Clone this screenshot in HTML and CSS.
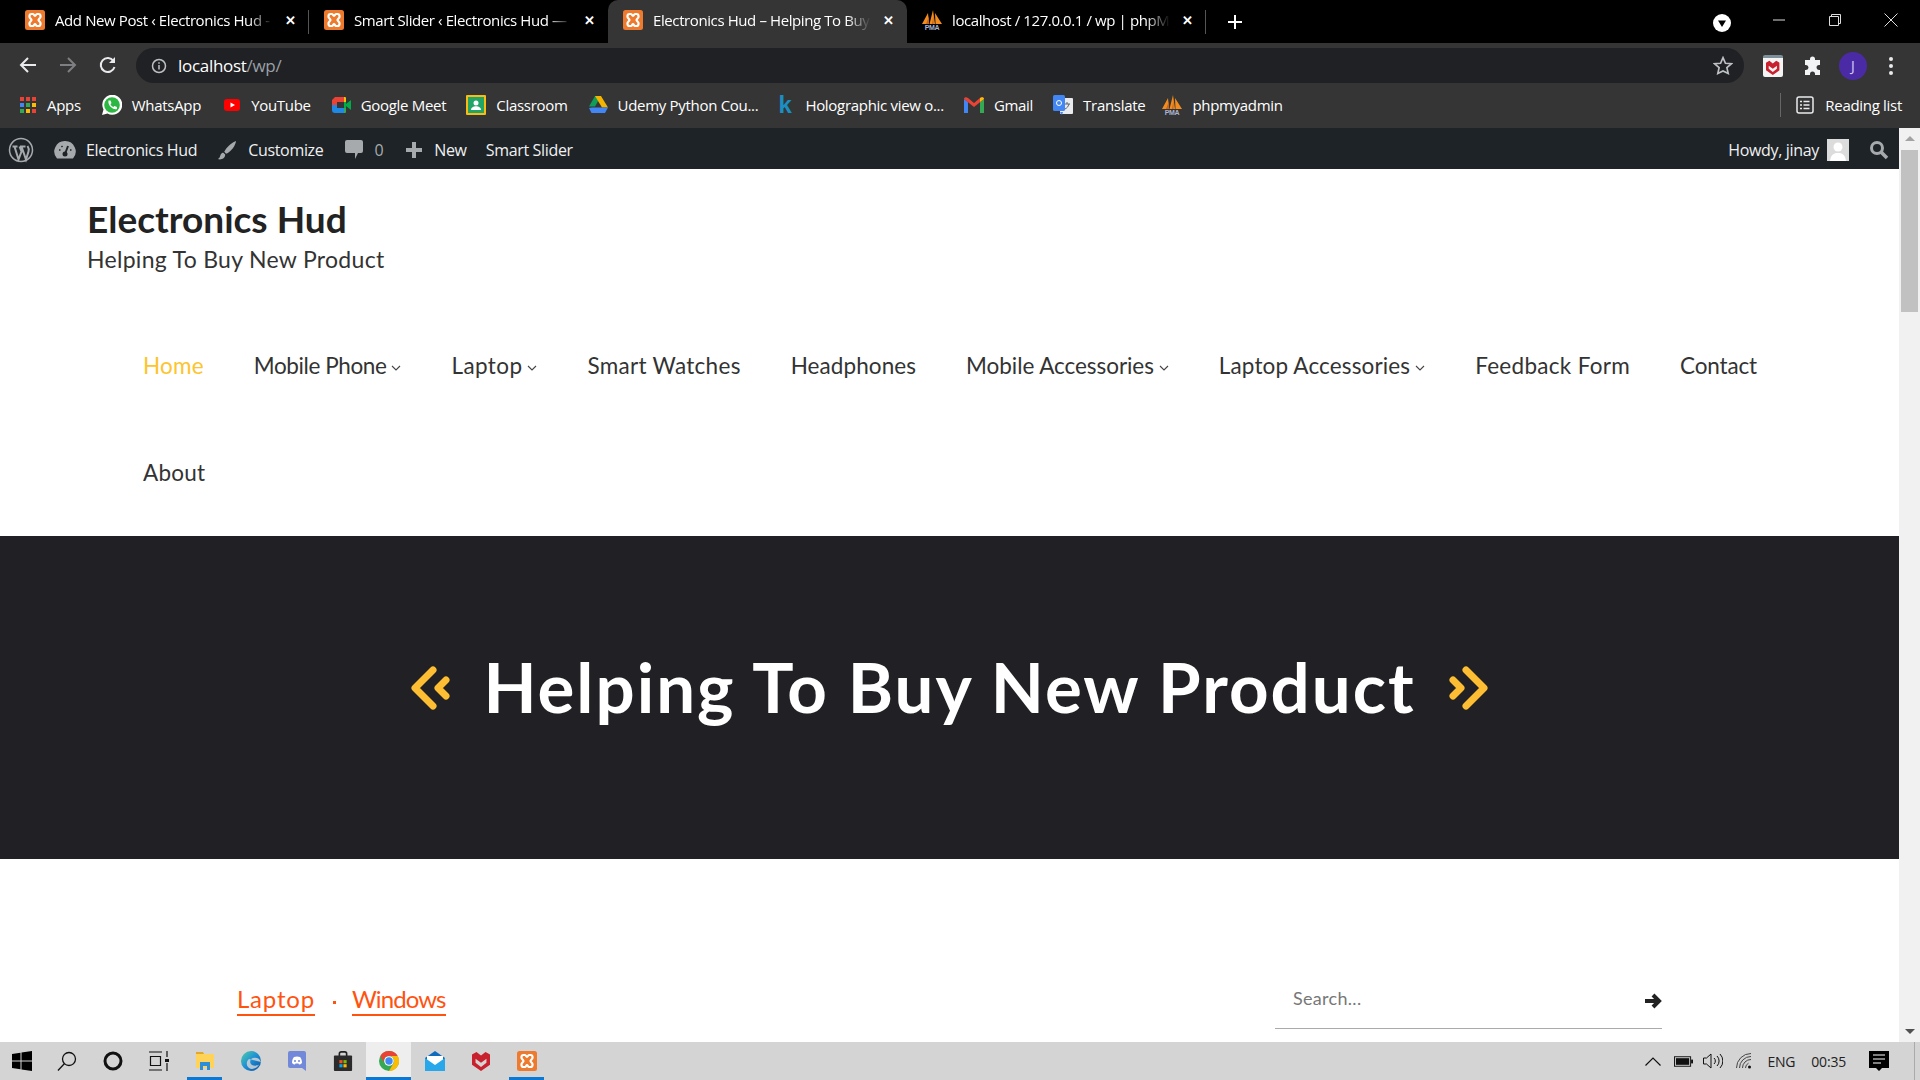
FILE: index.html
```html
<!DOCTYPE html>
<html lang="en">
<head>
  <meta charset="UTF-8" />
  <title>Electronics Hud – Helping To Buy New Product</title>
  <link rel="stylesheet" href="styles.css">
</head>
<body>
  <svg class="defs" width="0" height="0">
    <symbol id="xampp" viewBox="0 0 20 20">
      <rect width="20" height="20" rx="2.500" fill="#ee7a2d"/>
      <path d="M4.500 6a2 2 0 0 1 2-2H8c1 0 1.200 2 2 2s1-2 2-2h1.500a2 2 0 0 1 2 2v1c0 1-2 2-2 3s2 2 2 3v1a2 2 0 0 1-2 2H12c-1 0-1.200-2-2-2s-1 2-2 2H6.500a2 2 0 0 1-2-2v-1c0-1 2-2 2-3s-2-2-2-3z" fill="none" stroke="#fff" stroke-width="2.200"/>
    </symbol>
    <symbol id="pma" viewBox="0 0 20 20">
      <path d="M0 14 6 3l1 11zM7.500 14 11 0l2 14zM13.500 14 13 3l7 11z" fill="#f28c1e"/>
      <path d="M4 14 7 6v8zM10 14l1.500-9V14z" fill="#c9641a"/>
    </symbol>
    <symbol id="mcafee" viewBox="0 0 20 22">
      <path fill-rule="evenodd" d="M0 4 5 1l5 4 5-4 5 3v11l-10 7-10-7zM4 8.500V13l6 4.500 6-4.500V8.500l-6 4.500z" fill="#c8202d"/>
    </symbol>
  </svg>

  <div class="tabstrip">
    <div class="tab">
      <svg class="favicon"><use href="#xampp"/></svg>
      <span class="tab-title">Add New Post ‹ Electronics Hud -</span>
      <span class="tab-x">✕</span>
    </div>
    <div class="tab">
      <svg class="favicon"><use href="#xampp"/></svg>
      <span class="tab-title">Smart Slider ‹ Electronics Hud —</span>
      <span class="tab-x">✕</span>
    </div>
    <div class="tab active">
      <svg class="favicon"><use href="#xampp"/></svg>
      <span class="tab-title">Electronics Hud – Helping To Buy</span>
      <span class="tab-x">✕</span>
    </div>
    <div class="tab tab-last">
      <svg class="favicon" viewBox="0 0 20 20"><use href="#pma"/><text x="10" y="20" text-anchor="middle" class="pma-text">PMA</text></svg>
      <span class="tab-title">localhost / 127.0.0.1 / wp | phpM</span>
      <span class="tab-x">✕</span>
    </div>
    <svg class="newtab" viewBox="0 0 14 14"><path d="M7 0v14M0 7h14" stroke="#fff" stroke-width="2"/></svg>
    <div class="win-controls">
      <svg class="tab-search" viewBox="0 0 18 18"><circle cx="9" cy="9" r="9" fill="#fff"/><path d="M5 6.500h8L9 13z" fill="#000"/></svg>
      <svg class="win-btn" viewBox="0 0 14 14"><path d="M1 7h12" stroke="#ddd"/></svg>
      <svg class="win-btn" viewBox="0 0 14 14"><path d="M1.500 3.500h9v9h-9zM3.500 3.500v-2h9v9h-2" fill="none" stroke="#ddd"/></svg>
      <svg class="win-btn" viewBox="0 0 14 14"><path d="M.5.500l13 13M13.500.500l-13 13" stroke="#ddd"/></svg>
    </div>
  </div>

  <div class="toolbar">
    <svg class="nav-ico" viewBox="0 0 18 18"><path d="M17 9H2M9 2 2 9l7 7" fill="none" stroke="#e8eaed" stroke-width="2"/></svg>
    <svg class="nav-ico" viewBox="0 0 18 18"><path d="M1 9h15M9 2l7 7-7 7" fill="none" stroke="#7d7f82" stroke-width="2"/></svg>
    <svg class="nav-ico" viewBox="0 0 18 18"><path d="M15.500 11a7 7 0 1 1-1-6" fill="none" stroke="#e8eaed" stroke-width="2"/><path d="M16 1v6h-6z" fill="#e8eaed"/></svg>
    <div class="omnibox">
      <svg class="info-ico" viewBox="0 0 16 16"><circle cx="8" cy="8" r="6.500" fill="none" stroke="#bdc1c6" stroke-width="1.500"/><path d="M8 7v4.500M8 4.300v1.400" stroke="#bdc1c6" stroke-width="1.500"/></svg>
      <span class="url">localhost<span class="url-path">/wp/</span></span>
      <svg class="star-ico" viewBox="0 0 18 18"><path d="M9 1.500l2.200 5 5.300.5-4 3.500 1.200 5.300L9 13.500l-4.700 2.300 1.200-5.300-4-3.500 5.300-.5z" fill="none" stroke="#bdc1c6" stroke-width="1.500"/></svg>
    </div>
    <div class="ext-icons">
      <span class="ext-mcafee"><svg viewBox="0 0 20 22"><use href="#mcafee"/></svg></span>
      <svg class="ext-puzzle" viewBox="0 0 20 20"><path d="M7 3a2.500 2.500 0 0 1 5 0v1h5v5h-1a2.500 2.500 0 0 0 0 5h1v5h-5v-1a2.500 2.500 0 0 0-5 0v1H2v-5h1a2.500 2.500 0 0 0 0-5H2V4h5z" fill="#f1f3f4"/></svg>
      <span class="profile">J</span>
      <svg class="menu-dots" viewBox="0 0 4 18"><circle cx="2" cy="2" r="2" fill="#e8eaed"/><circle cx="2" cy="9" r="2" fill="#e8eaed"/><circle cx="2" cy="16" r="2" fill="#e8eaed"/></svg>
    </div>
  </div>

  <div class="bookmarks">
    <a class="bm bm-apps"><svg class="bm-ico" viewBox="0 0 16 16"><path d="M0 0h4v4H0z" fill="#ea4335"/><path d="M6 0h4v4H6z" fill="#ea4335"/><path d="M12 0h4v4h-4z" fill="#ea4335"/><path d="M0 6h4v4H0z" fill="#4285f4"/><path d="M6 6h4v4H6z" fill="#34a853"/><path d="M12 6h4v4h-4z" fill="#fbbc05"/><path d="M0 12h4v4H0z" fill="#34a853"/><path d="M6 12h4v4H6z" fill="#fbbc05"/><path d="M12 12h4v4h-4z" fill="#ea4335"/></svg>Apps</a>
    <a class="bm bm-whatsapp"><svg class="bm-ico wide" viewBox="0 0 20 20"><path d="M0 20l1.500-5.500A10 10 0 1 1 5.500 18.500z" fill="#fff"/><circle cx="10" cy="10" r="7.800" fill="#2bb741"/><path d="M6.500 5.500l2 0 1 2.500-1 1.200c.6 1.300 1.500 2.200 2.800 2.800l1.200-1 2.500 1v2c-4 1.200-9.500-3.500-8.500-8.500z" fill="#fff"/></svg>WhatsApp</a>
    <a class="bm"><svg class="bm-ico" viewBox="0 0 16 16"><rect y="2" width="16" height="12" rx="3" fill="#f00"/><path d="M6.500 5.500 11 8l-4.500 2.500z" fill="#fff"/></svg>YouTube</a>
    <a class="bm"><svg class="bm-ico wide" viewBox="0 0 20 20"><path d="M4 2h9v5H6v3H1V5z" fill="#ea4335"/><path d="M1 10h5v3h7v5H4a3 3 0 0 1-3-3z" fill="#1e88e5"/><path d="M13 2h1a1 1 0 0 1 1 1v4h-2z" fill="#fbbc05"/><path d="M13 13h2v4a1 1 0 0 1-1 1h-1z" fill="#34a853"/><path d="M13 7h2v6h-2zM15 9l5-4v10l-5-4z" fill="#00ac47"/><rect x="6" y="7" width="7" height="6" fill="#353535"/></svg>Google Meet</a>
    <a class="bm"><svg class="bm-ico wide" viewBox="0 0 20 20"><rect width="20" height="20" rx="1" fill="#f9bc15"/><rect x="2" y="2" width="16" height="16" fill="#21a465"/><circle cx="10" cy="8" r="2.500" fill="#fff"/><path d="M5 15c0-5 10-5 10 0z" fill="#fff"/></svg>Classroom</a>
    <a class="bm"><svg class="bm-ico wide" viewBox="0 0 20 18"><path d="M7 0h6l-6 10.500H1z" fill="#0f9d58"/><path d="M7 0h6l7 11.500h-6z" fill="#f4b400"/><path d="M4 11.500h16L17 17H3.500L1 12z" fill="#4285f4"/></svg>Udemy Python Cou...</a>
    <a class="bm"><span class="bm-k">k</span>Holographic view o...</a>
    <a class="bm"><svg class="bm-ico wide" viewBox="0 0 20 16"><path d="M0 2v14h4V5z" fill="#4285f4"/><path d="M16 5v11h4V2z" fill="#34a853"/><path d="M0 2c0-2 2.500-2.500 4-1l6 5 6-5c1.500-1.500 4-1 4 1l-10 8z" fill="#ea4335"/><path d="M16 1c1.500-1.500 4-1 4 1l-4 3z" fill="#fbbc05"/></svg>Gmail</a>
    <a class="bm bm-translate"><svg class="bm-ico wide" viewBox="0 0 20 20"><rect x="7" y="3" width="13" height="16" rx="1" fill="#e8eaed"/><rect width="12" height="16" rx="1.500" fill="#4285f4"/><path d="M10 17h-3l2 3z" fill="#4285f4"/><circle cx="6" cy="8" r="2.500" fill="none" stroke="#fff"/><path d="M12 9h5M14 7v2M16 9c-1 3-2 4-4 5" stroke="#5f6368" fill="none"/></svg>Translate</a>
    <a class="bm"><svg class="bm-ico wide" viewBox="0 0 20 20"><use href="#pma"/><text x="10" y="20" text-anchor="middle" class="pma-text">PMA</text></svg>phpmyadmin</a>
    <a class="bm reading"><svg class="bm-ico reading-ico" viewBox="0 0 18 18"><rect x="1" y="1" width="16" height="16" rx="2" fill="none" stroke="#e8eaed" stroke-width="1.500"/><path d="M7.500 5.500h6M7.500 9h6M7.500 12.500h6M4 5.500h2M4 9h2M4 12.500h2" stroke="#e8eaed" stroke-width="1.500"/></svg>Reading list</a>
  </div>

  <div class="viewport">
    <main class="page">
      <div class="wp-bar">
        <svg class="wp-logo" viewBox="0 0 26 26"><circle cx="13" cy="13" r="11.500" fill="none" stroke="#a7aaad" stroke-width="1.500"/><path d="M4.500 9.500h5M12 9.500h5.500M6.500 9.500l4 13 3-8-2-5M13.500 9.500l4.500 13 2.500-8c.8-2.500 0-4-1-5.500" fill="none" stroke="#a7aaad" stroke-width="2"/></svg>
        <span class="wp-item site"><svg class="wp-ico" viewBox="0 0 22 20"><path d="M11 1a10.500 10.500 0 0 0-8 17.500h16A10.500 10.500 0 0 0 11 1z" fill="#a7aaad"/><path d="M11 14l3-8" stroke="#1d2327" stroke-width="2"/><circle cx="11" cy="14" r="2.500" fill="#1d2327"/><path d="M5 10h1.500M16 10h1.500M7.500 6l1 1" stroke="#1d2327" stroke-width="1.500"/></svg>Electronics Hud</span>
        <span class="wp-item"><svg class="wp-ico" viewBox="0 0 22 22"><path d="M21 1C16 3 10 8 8 13l2 2c5-2 10-8 11-14z" fill="#a7aaad"/><path d="M7 14c-3 0-3 3-4 5-.4 1-1.500 1.500-2 2 3 1 8 0 8-5z" fill="#a7aaad"/></svg>Customize</span>
        <span class="wp-item comments"><svg class="wp-ico small" viewBox="0 0 18 20"><path d="M2 0h14a2 2 0 0 1 2 2v9a2 2 0 0 1-2 2h-3l-3 6v-6H2a2 2 0 0 1-2-2V2a2 2 0 0 1 2-2z" fill="#a7aaad"/></svg><span class="wp-count">0</span></span>
        <span class="wp-item"><svg class="wp-ico small" viewBox="0 0 18 18"><path d="M9 1v16M1 9h16" stroke="#a7aaad" stroke-width="4"/></svg>New</span>
        <span class="wp-item">Smart Slider</span>
        <span class="wp-right">Howdy, jinay
          <svg class="wp-avatar" viewBox="0 0 22 22"><rect width="22" height="22" fill="#dcdcdc"/><circle cx="11" cy="8" r="4.500" fill="#fff"/><path d="M3 22c1-7 4-8 8-8s7 1 8 8z" fill="#fff"/></svg>
          <svg class="wp-search" viewBox="0 0 20 20"><circle cx="8" cy="8" r="5.500" fill="none" stroke="#a7aaad" stroke-width="3"/><path d="M12 12l6 6" stroke="#a7aaad" stroke-width="3.500"/></svg>
        </span>
      </div>

      <header class="site-head">
        <h1 class="site-title">Electronics Hud</h1>
        <p class="site-tag">Helping To Buy New Product</p>
        <nav class="main-nav">
          <a class="current">Home</a>
          <a class="n-mobile">Mobile Phone<svg class="caret" viewBox="0 0 10 6"><path d="M1 1l4 4 4-4" fill="none" stroke="#444" stroke-width="1.100"/></svg></a>
          <a class="n-laptop">Laptop<svg class="caret" viewBox="0 0 10 6"><path d="M1 1l4 4 4-4" fill="none" stroke="#444" stroke-width="1.100"/></svg></a>
          <a class="n-watch">Smart Watches</a>
          <a class="n-head">Headphones</a>
          <a class="n-macc">Mobile Accessories<svg class="caret" viewBox="0 0 10 6"><path d="M1 1l4 4 4-4" fill="none" stroke="#444" stroke-width="1.100"/></svg></a>
          <a class="n-lacc">Laptop Accessories<svg class="caret" viewBox="0 0 10 6"><path d="M1 1l4 4 4-4" fill="none" stroke="#444" stroke-width="1.100"/></svg></a>
          <a class="n-watch">Feedback Form</a>
          <a class="n-contact">Contact</a>
          <a>About</a>
        </nav>
      </header>

      <section class="hero">
        <svg class="hero-chev" viewBox="0 0 40 44"><path d="M22 4 4 22l18 18M35 14l-8 8 8 8" fill="none" stroke="#fdbe33" stroke-width="7" stroke-linecap="round" stroke-linejoin="round"/></svg>
        <h2 class="hero-title">Helping To Buy New Product</h2>
        <svg class="hero-chev" viewBox="0 0 40 44"><path d="M18 4l18 18-18 18M5 14l8 8-8 8" fill="none" stroke="#fdbe33" stroke-width="7" stroke-linecap="round" stroke-linejoin="round"/></svg>
      </section>

      <section class="content">
        <div class="cats">
          <a class="cat-laptop">Laptop</a>
          <span class="cat-dot"></span>
          <a class="cat-windows">Windows</a>
        </div>
        <div class="search">
          <span class="search-ph">Search...</span>
          <svg class="search-go" viewBox="0 0 18 16"><path d="M1 8h14M9 2l6 6-6 6" fill="none" stroke="#222" stroke-width="4"/></svg>
        </div>
      </section>
    </main>
    <div class="scrollbar">
      <span class="sb-arrow up"></span>
      <span class="sb-thumb"></span>
      <span class="sb-arrow down"></span>
    </div>
  </div>

  <footer class="taskbar">
    <span class="tb-item"><svg viewBox="0 0 20 20"><path d="M0 3l8.500-1.300V9.500H0zM9.500 1.500 20 0v9.500H9.500zM0 10.500h8.500v7.800L0 17zM9.500 10.500H20V20L9.500 18.500z" fill="#000"/></svg></span>
    <span class="tb-item"><svg viewBox="0 0 20 20"><circle cx="12" cy="8" r="6.500" fill="none" stroke="#111" stroke-width="1.300"/><path d="M7.500 12.500 1 19.500" stroke="#111" stroke-width="1.300"/></svg></span>
    <span class="tb-item"><svg viewBox="0 0 20 20"><circle cx="10" cy="10" r="8" fill="none" stroke="#111" stroke-width="3"/></svg></span>
    <span class="tb-item"><svg viewBox="0 0 20 20"><path d="M0 1h13M0 19h13M1.500 5.500h10v9h-10zM18 0v6M18 12v8" fill="none" stroke="#111" stroke-width="1.200"/><rect x="16" y="8" width="4" height="3" fill="#111"/></svg></span>
    <span class="tb-item open"><svg viewBox="0 0 20 20"><path d="M1 1h7l1 2h10v14H1z" fill="#ffd258"/><path d="M1 1h7l1 2H1z" fill="#e3a82b"/><path d="M5 19v-8h10v8h-3v-4H8v4z" fill="#2a8fd8"/></svg></span>
    <span class="tb-item"><svg viewBox="0 0 20 20"><defs><linearGradient id="edge" x1="0" y1="0" x2="1" y2="1"><stop offset="0" stop-color="#4fd1a5"/><stop offset=".5" stop-color="#1d8fd6"/><stop offset="1" stop-color="#0c4f9c"/></linearGradient></defs><circle cx="10" cy="10" r="10" fill="url(#edge)"/><path d="M20 11c-1-4-5-5-8-4-3 1-4 5-1 7 2 1 5 1 7-.5-2 4-7 5.500-10 3.500-3-2-3-7 0-9" fill="#d4d4d4" opacity=".85"/></svg></span>
    <span class="tb-item"><svg viewBox="0 0 18 20"><path d="M2 0h14a2 2 0 0 1 2 2v18l-4-3H2a2 2 0 0 1-2-2V2a2 2 0 0 1 2-2z" fill="#7289da"/><path d="M4 12c0-3 1-5 2-6 2-.7 4-.7 6 0 1 1 2 3 2 6-1 1-2 1.500-3 1.500l-.5-1H7.500l-.5 1c-1 0-2-.5-3-1.500z" fill="#fff"/><circle cx="7" cy="10" r="1" fill="#7289da"/><circle cx="11" cy="10" r="1" fill="#7289da"/></svg></span>
    <span class="tb-item"><svg viewBox="0 0 20 22"><path d="M6 6V3a2 2 0 0 1 2-2h4a2 2 0 0 1 2 2v3" fill="none" stroke="#222" stroke-width="1.800"/><rect y="5" width="20" height="17" rx="1" fill="#2b2b2b"/><path d="M6 10h3.500v3.500H6z" fill="#f25022"/><path d="M10.500 10H14v3.500h-3.500z" fill="#7fba00"/><path d="M6 14.500h3.500V18H6z" fill="#00a4ef"/><path d="M10.500 14.500H14V18h-3.500z" fill="#ffb900"/></svg></span>
    <span class="tb-item active"><svg viewBox="0 0 20 20"><circle cx="10" cy="10" r="10" fill="#34a853"/><path d="M10 0a10 10 0 0 1 8.700 5H10a5 5 0 0 0-4.500 7.500L1.300 5A10 10 0 0 1 10 0z" fill="#ea4335"/><path d="M18.700 5A10 10 0 0 1 10 20l4.400-7.500A5 5 0 0 0 10 5z" fill="#fbbc05"/><circle cx="10" cy="10" r="4.800" fill="#fff"/><circle cx="10" cy="10" r="3.700" fill="#4285f4"/></svg></span>
    <span class="tb-item"><svg viewBox="0 0 20 20"><path d="M10 0l10 7v13H0V7z" fill="#0f6cbd"/><path d="M2 5h16v9H2z" fill="#fff"/><path d="M0 7l10 7 10-7v13H0z" fill="#28a8ea"/></svg></span>
    <span class="tb-item"><svg viewBox="0 0 20 22"><use href="#mcafee"/></svg></span>
    <span class="tb-item open"><svg viewBox="0 0 20 20"><use href="#xampp"/></svg></span>

    <div class="tray">
      <svg class="tray-chev" viewBox="0 0 16 9"><path d="M.5 8.500 8 1l7.500 7.500" fill="none" stroke="#111" stroke-width="1.200"/></svg>
      <svg class="tray-batt" viewBox="0 0 20 11"><rect x=".5" y=".5" width="17" height="10" fill="none" stroke="#111"/><rect x="2" y="2" width="14" height="7" fill="#111"/><rect x="18" y="3.500" width="2" height="4" fill="#111"/></svg>
      <svg class="tray-vol" viewBox="0 0 20 16"><path d="M.5 5h3L8 1v14l-4.500-4h-3z" fill="none" stroke="#111"/><path d="M11 5a4 4 0 0 1 0 6M14 3a7 7 0 0 1 0 10M17 1a10 10 0 0 1 0 14" fill="none" stroke="#111"/></svg>
      <svg class="tray-wifi" viewBox="0 0 16 16"><path d="M.5 15A14.500 14.500 0 0 1 15 .5M3.500 15A11.500 11.500 0 0 1 15 3.500M6.500 15A8.500 8.500 0 0 1 15 6.500M9.500 15a5.500 5.500 0 0 1 3-4.800" fill="none" stroke="#444"/><circle cx="13.500" cy="14" r="1.500" fill="#111"/></svg>
      <span class="tray-text lang">ENG</span>
      <span class="tray-text clock">00:35</span>
      <svg class="tray-note" viewBox="0 0 20 20"><path d="M0 0h20v17h-7l-3 3-3-3H0z" fill="#000"/><path d="M4 4h12M4 8h12M4 12h8" stroke="#fff"/></svg>
    </div>
  </footer>
</body>
</html>
```

FILE: styles.css
```css
* {
  box-sizing: border-box;
}
html, body {
  margin: 0;
  height: 1080px;
  overflow: hidden;
}
body {
  display: flex;
  flex-direction: column;
  font-family: "Open Sans", sans-serif;
  background-color: #fff;
}
.defs {
  position: absolute;
}
.pma-text {
  font: bold 7px "Liberation Sans", sans-serif;
  fill: #aab4d0;
}

/* tabs */
.tabstrip {
  height: 43px;
  flex: none;
  background-color: #000;
  display: flex;
  padding-left: 10px;
  color: #fff;
}
.tab {
  width: 299px;
  display: flex;
  align-items: center;
  padding: 0 8px 3px 15px;
  position: relative;
  font-size: 15px;
  letter-spacing: -0.4px;
}
.tab::after {
  content: "";
  position: absolute;
  right: 0;
  top: 10px;
  height: 24px;
  width: 1px;
  background-color: #555;
}
.tab:nth-child(2)::after,
.tab:nth-child(3)::after {
  display: none;
}
.tab.active {
  background-color: #353535;
  border-radius: 10px 10px 0 0;
}
.favicon {
  width: 20px;
  height: 20px;
  flex: none;
  margin-right: 10px;
}
.tab-title {
  flex: 1;
  white-space: nowrap;
  overflow: hidden;
  -webkit-mask-image: linear-gradient(to right, #000 88%, transparent 99%);
  mask-image: linear-gradient(to right, #000 88%, transparent 99%);
}
.tab-x {
  width: 22px;
  text-align: center;
  font-size: 13px;
  font-weight: 700;
  margin-left: 4px;
}
.newtab {
  width: 14px;
  height: 14px;
  margin: 15px 0 0 22px;
}
.win-controls {
  margin-left: auto;
  display: flex;
  align-items: center;
  padding-right: 22px;
}
.tab-search {
  width: 18px;
  height: 18px;
  margin: 3px 41px 0 0;
}
.win-btn {
  width: 14px;
  height: 14px;
  margin-left: 42px;
  margin-bottom: 4px;
}
.win-btn:nth-child(2) {
  margin-left: 0;
}

/* address bar */
.toolbar {
  height: 40px;
  flex: none;
  background-color: #353535;
  display: flex;
  align-items: center;
  padding-left: 19px;
}
.nav-ico {
  width: 18px;
  height: 18px;
  margin-right: 22px;
  margin-top: 4px;
  flex: none;
}
.omnibox {
  width: 1608px;
  height: 35px;
  margin-left: -3px;
  margin-top: 5px;
  border-radius: 18px;
  background-color: #202124;
  display: flex;
  align-items: center;
  padding-left: 15px;
  font-size: 17px;
}
.info-ico {
  width: 16px;
  height: 16px;
  margin-right: 11px;
}
.url {
  color: #fff;
  letter-spacing: -0.3px;
}
.url-path {
  color: #9aa0a6;
}
.star-ico {
  width: 20px;
  height: 20px;
  margin-left: auto;
  margin-right: 11px;
}
.ext-icons {
  display: flex;
  align-items: center;
  margin-left: 19px;
  margin-top: 5px;
}
.ext-mcafee {
  width: 20px;
  height: 22px;
  background-color: #f4f4f4;
  border-top: 3px solid #7d8f9b;
  border-radius: 2px;
  display: flex;
  justify-content: center;
  padding: 2px 3px;
}
.ext-puzzle {
  width: 20px;
  height: 20px;
  margin-left: 20px;
}
.profile {
  width: 28px;
  height: 28px;
  margin-left: 16px;
  border-radius: 50%;
  background-color: #4a2ba5;
  color: #d9ccff;
  font-size: 14px;
  display: flex;
  align-items: center;
  justify-content: center;
}
.menu-dots {
  width: 4px;
  height: 18px;
  margin-left: 22px;
}

/* bookmarks */
.bookmarks {
  height: 45px;
  flex: none;
  background-color: #353535;
  display: flex;
  align-items: center;
  padding: 0 0 1px 20px;
  color: #fff;
  font-size: 15px;
  letter-spacing: -0.3px;
}
.bm {
  display: flex;
  align-items: center;
  margin-right: 20px;
  white-space: nowrap;
}
.bm-apps {
  margin-right: 21px;
}
.bm-whatsapp {
  margin-right: 23px;
}
.bm-translate {
  margin-right: 17px;
}
.bm-ico {
  width: 16px;
  height: 16px;
  margin-right: 11px;
  flex: none;
}
.bm-ico.wide {
  width: 20px;
  height: 20px;
  margin-right: 10px;
}
.bm-k {
  width: 14px;
  margin-right: 13px;
  color: #1b8fc4;
  font: bold 24px "Liberation Sans", sans-serif;
  line-height: 20px;
}
.reading {
  margin-left: auto;
  margin-right: 18px;
  padding-left: 15px;
  border-left: 1px solid #666;
  height: 24px;
}
.reading-ico {
  width: 18px;
  height: 18px;
}

/* wordpress admin bar */
.wp-bar {
  height: 41px;
  background-color: #1d2327;
  display: flex;
  align-items: center;
  padding: 2px 10px 0 8px;
  color: #f0f0f1;
  font-family: "Open Sans", sans-serif;
  font-size: 16px;
  letter-spacing: -0.33px;
}
.wp-logo {
  width: 26px;
  height: 26px;
  margin-right: 20px;
}
.wp-item {
  display: flex;
  align-items: center;
  margin-right: 19px;
  white-space: nowrap;
}
.wp-ico {
  width: 22px;
  height: 20px;
  margin-right: 10px;
}
.wp-ico.small {
  width: 18px;
  margin-right: 11px;
}
.wp-count {
  color: #a7aaad;
}
.comments {
  margin-left: 3px;
  margin-right: 22px;
}
.wp-right {
  margin-left: auto;
  display: flex;
  align-items: center;
}
.wp-avatar {
  width: 22px;
  height: 22px;
  margin-left: 8px;
}
.wp-search {
  width: 20px;
  height: 20px;
  margin-left: 20px;
}

/* page */
.viewport {
  flex: 1;
  display: flex;
  min-height: 0;
}
.page {
  flex: 1;
  min-width: 0;
  overflow: hidden;
  font-family: Lato, sans-serif;
  color: #222;
}
.site-head {
  height: 367px;
  padding: 28px 88px 0 87px;
}
.site-title {
  margin: 0;
  font-size: 37px;
  line-height: 44px;
  font-weight: 700;
  color: #222;
}
.site-tag {
  margin: 4px 0 0;
  font-size: 23px;
  line-height: 28px;
  letter-spacing: 0.3px;
  color: #333;
}
.main-nav {
  display: flex;
  flex-wrap: wrap;
  margin: 39px 0 0 31px;
  font-size: 22.500px;
  letter-spacing: 0.2px;
  color: #333;
}
.main-nav a {
  display: flex;
  align-items: center;
  padding: 0 25px;
  height: 107px;
  white-space: nowrap;
}
.main-nav .current {
  color: #fdc42d;
}
.main-nav .n-mobile {
  letter-spacing: -0.4px;
}
.main-nav .n-laptop {
  letter-spacing: 0.4px;
}
.main-nav .n-watch {
  letter-spacing: 0.3px;
}
.main-nav .n-head {
  letter-spacing: 0.08px;
}
.main-nav .n-macc {
  letter-spacing: -0.06px;
}
.main-nav .n-lacc {
  letter-spacing: 0.13px;
}
.main-nav .n-contact {
  letter-spacing: -0.15px;
}
.caret {
  width: 10px;
  height: 6px;
  margin: 4px 0 0 5px;
}
.hero {
  height: 323px;
  padding-bottom: 22px;
  background-color: #212125;
  display: flex;
  align-items: center;
  justify-content: center;
  gap: 32px;
}
.hero-chev {
  width: 40px;
  height: 44px;
  margin-top: 3px;
}
.hero-title {
  margin: 0;
  color: #fff;
  font-size: 69px;
  font-weight: 700;
  line-height: 80px;
  letter-spacing: 2px;
  white-space: nowrap;
}
.content {
  display: flex;
  padding: 124px 237px 0 237px;
  justify-content: space-between;
}
.cats {
  display: flex;
  align-items: center;
  height: 33px;
  font-size: 24px;
  color: #ff5310;
}
.cats a {
  border-bottom: 2px solid #ff5310;
  line-height: 31px;
}
.cat-laptop {
  letter-spacing: 0.8px;
}
.cat-windows {
  letter-spacing: -0.9px;
}
.cat-dot {
  width: 3px;
  height: 3px;
  margin: 5px 16px 0 18px;
  background-color: #ff5310;
}
.search {
  width: 387px;
  height: 62px;
  margin-top: -16px;
  padding-left: 18px;
  border-bottom: 1px solid #aaa;
  display: flex;
  align-items: center;
  justify-content: space-between;
  font-size: 18px;
  color: #777;
  letter-spacing: 0.3px;
}
.search-go {
  width: 18px;
  height: 16px;
  margin-top: 6px;
}
.scrollbar {
  width: 21px;
  flex: none;
  background-color: #f1f1f1;
  display: flex;
  flex-direction: column;
  align-items: center;
}
.sb-arrow {
  width: 0;
  height: 0;
  border-left: 5px solid transparent;
  border-right: 5px solid transparent;
}
.sb-arrow.up {
  margin-top: 8px;
  border-bottom: 5px solid #a3a3a3;
}
.sb-arrow.down {
  margin-top: auto;
  margin-bottom: 8px;
  border-top: 5px solid #505050;
}
.sb-thumb {
  width: 17px;
  height: 162px;
  margin-top: 9px;
  background-color: #c1c1c1;
}

/* windows taskbar */
.taskbar {
  height: 38px;
  flex: none;
  background-color: #d4d4d4;
  display: flex;
  align-items: stretch;
}
.tb-item {
  width: 45px;
  display: flex;
  align-items: center;
  justify-content: center;
  margin-right: 1px;
}
.tb-item:first-child {
  width: 43px;
}
.tb-item svg {
  width: 20px;
  height: 20px;
}
.tb-item.open {
  background: linear-gradient(#0a78d4, #0a78d4) center bottom / 35px 3px no-repeat;
}
.tb-item.active {
  background: #eeeeee linear-gradient(#0a78d4, #0a78d4) center bottom / 100% 3px no-repeat;
}
.tray {
  margin-left: auto;
  margin-right: 5px;
  padding-right: 25px;
  border-right: 1px solid #aaa;
  display: flex;
  align-items: center;
  color: #222;
  font-size: 14px;
}
.tray-chev {
  width: 16px;
  height: 9px;
  margin-right: 13px;
}
.tray-batt {
  width: 19px;
  height: 11px;
  margin-right: 10px;
}
.tray-vol {
  width: 20px;
  height: 16px;
  margin-right: 13px;
}
.tray-wifi {
  width: 16px;
  height: 16px;
  margin-right: 15px;
}
.lang {
  margin-right: 16px;
  letter-spacing: -0.2px;
}
.clock {
  margin-right: 23px;
  letter-spacing: -0.2px;
}
.tray-note {
  width: 20px;
  height: 20px;
}
```
